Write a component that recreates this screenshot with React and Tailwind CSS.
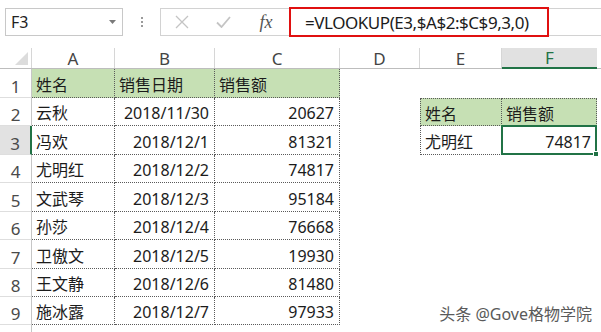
import React from "react";

const FONT = { fontFamily: '"Noto Sans", "Noto Sans CJK SC", sans-serif' };

const COLS = [
  { key: "A", w: "w-[83px]" },
  { key: "B", w: "w-[100px]" },
  { key: "C", w: "w-[125px]" },
  { key: "D", w: "w-[80px]" },
  { key: "E", w: "w-[82px]" },
  { key: "F", w: "w-[95px]" },
];

const DATA = [
  ["姓名", "销售日期", "销售额"],
  ["云秋", "2018/11/30", "20627"],
  ["冯欢", "2018/12/1", "81321"],
  ["尤明红", "2018/12/2", "74817"],
  ["文武琴", "2018/12/3", "95184"],
  ["孙莎", "2018/12/4", "76668"],
  ["卫傲文", "2018/12/5", "19930"],
  ["王文静", "2018/12/6", "81480"],
  ["施冰露", "2018/12/7", "97933"],
];

const ROW_H = ["h-[29px]", "h-[28px]", "h-[29px]", "h-[28px]", "h-[29px]", "h-[28px]", "h-[29px]", "h-[28px]", "h-[28px]"];

function Cell({ w, children, right, green, dotted, extra = "" }) {
  return (
    <div
      className={`${w} shrink-0 h-full flex items-center pt-[3px] text-[16px] text-[#1b1b1b] leading-none ${
        right ? "justify-end pr-[5px]" : "justify-start pl-[4px]"
      } ${green ? "bg-[#c6e0b4]" : ""} ${dotted ? "border-r border-b border-dotted border-[#5a5a5a]" : ""} ${extra}`}
    >
      {children}
    </div>
  );
}

function Row({ idx }) {
  const r = idx + 1;
  const d = DATA[idx];
  const sel = r === 3;
  return (
    <div className={`flex ${ROW_H[idx]}`}>
      <div
        className={`w-[32px] shrink-0 flex items-end justify-center pb-[2px] text-[17px] leading-none text-[#4a4a4a] border-b border-[#dedede] ${
          sel ? "bg-[#e2e2e2] border-r-2 border-r-[#217346]" : "border-r border-r-[#c6c6c6]"
        }`}
      >
        {r}
      </div>
      <Cell w="w-[83px]" green={r === 1} dotted>
        {d[0]}
      </Cell>
      <Cell w="w-[100px]" green={r === 1} dotted right={r !== 1}>
        {d[1]}
      </Cell>
      <Cell w="w-[125px]" green={r === 1} dotted right={r !== 1}>
        {d[2]}
      </Cell>
      <Cell w="w-[80px]" />
      {r === 2 && (
        <>
          <Cell w="w-[82px]" green dotted extra="border-l border-t">
            姓名
          </Cell>
          <Cell w="w-[95px]" green dotted extra="border-t">
            销售额
          </Cell>
        </>
      )}
      {r === 3 && (
        <>
          <Cell w="w-[82px]" dotted extra="border-l">
            尤明红
          </Cell>
          <div className="w-[95px] shrink-0 h-full relative flex items-center justify-end pr-[5px] pt-[3px] text-[16px] leading-none text-[#1b1b1b] border-r border-b border-dotted border-[#5a5a5a]">
            74817
            <div className="absolute -top-[1px] -left-[1px] -right-[1px] -bottom-[1px] border-2 border-[#217346]" />
            <div className="absolute -right-[3px] -bottom-[3px] w-[6px] h-[6px] bg-[#217346] border border-white" />
          </div>
        </>
      )}
      {r !== 2 && r !== 3 && (
        <>
          <Cell w="w-[82px]" />
          <Cell w="w-[95px]" />
        </>
      )}
    </div>
  );
}

export default function App() {
  return (
    <div className="w-[601px] h-[332px] bg-white relative overflow-hidden" style={FONT}>
      {/* toolbar */}
      <div className="h-[48px] flex items-start pt-[8px]">
        <div className="ml-[5px] w-[118px] h-[28px] border border-[#c8c8c8] flex items-center justify-between pl-[5px] pr-[6px]">
          <span className="text-[16px] text-[#222] leading-none">F3</span>
          <svg width="7" height="4" viewBox="0 0 7 4">
            <path d="M0 0 L7 0 L3.5 4 Z" fill="#7a7a7a" />
          </svg>
        </div>
        <div className="w-[37px] h-[28px] flex flex-col items-center justify-center gap-[2px]">
          <span className="w-[2px] h-[2px] bg-[#9a9a9a]" />
          <span className="w-[2px] h-[2px] bg-[#9a9a9a]" />
          <span className="w-[2px] h-[2px] bg-[#9a9a9a]" />
        </div>
        <div className="flex-1 h-[28px] flex items-stretch border-y border-l border-[#d2d2d2]">
          <div className="w-[128px] flex items-center">
            <div className="w-[42px] flex justify-center">
              <svg width="14" height="14" viewBox="0 0 14 14">
                <path d="M1 1 L13 13 M13 1 L1 13" stroke="#c4c4c4" strokeWidth="1.3" fill="none" />
              </svg>
            </div>
            <div className="w-[40px] flex justify-center">
              <svg width="15" height="12" viewBox="0 0 15 12">
                <path d="M1 6.5 L5.5 11 L14 1" stroke="#c4c4c4" strokeWidth="1.8" fill="none" />
              </svg>
            </div>
            <div className="w-[46px] flex justify-center">
              <span
                className="text-[18px] italic text-[#555] leading-none"
                style={{ fontFamily: '"Liberation Serif", serif' }}
              >
                <i>f</i>x
              </span>
            </div>
          </div>
          <div className="-my-[2px] w-[260px] border-2 border-[#e01010] flex items-center pl-[14px] text-[17px] text-[#1b1b1b] leading-none tracking-[-0.45px]">
            =VLOOKUP(E3,$A$2:$C$9,3,0)
          </div>
        </div>
      </div>

      {/* column headers */}
      <div className="flex h-[21px] border-b border-[#bdbdbd]">
        <div className="w-[32px] shrink-0 relative border-r border-[#d6d6d6]">
          <svg className="absolute right-[3px] bottom-[3px]" width="13" height="13" viewBox="0 0 13 13">
            <path d="M13 0 L13 13 L0 13 Z" fill="#dcdcdc" />
          </svg>
        </div>
        {COLS.map((c) => (
          <div
            key={c.key}
            className={`${c.w} shrink-0 flex items-end justify-center pb-[1px] text-[17px] leading-none ${
              c.key === "F"
                ? "bg-[#e1e1e1] text-[#217346] border-b-2 border-[#217346] -mb-[1px] mr-[2px]"
                : "text-[#444] border-r border-[#d6d6d6]"
            }`}
          >
            {c.key}
          </div>
        ))}
      </div>

      {/* rows */}
      {DATA.map((_, i) => (
        <Row key={i} idx={i} />
      ))}
      <div className="flex h-[10px]">
        <div className="w-[32px] shrink-0 border-r border-[#c6c6c6]" />
      </div>

      {/* watermark */}
      <div
        className="absolute right-[9px] bottom-[10px] text-[16px] leading-none text-[#5a5a5a]"
        style={{ textShadow: "1px 1px 0 #fff, -1px -1px 0 #fff" }}
      >
        头条 @Gove格物学院
      </div>
    </div>
  );
}
